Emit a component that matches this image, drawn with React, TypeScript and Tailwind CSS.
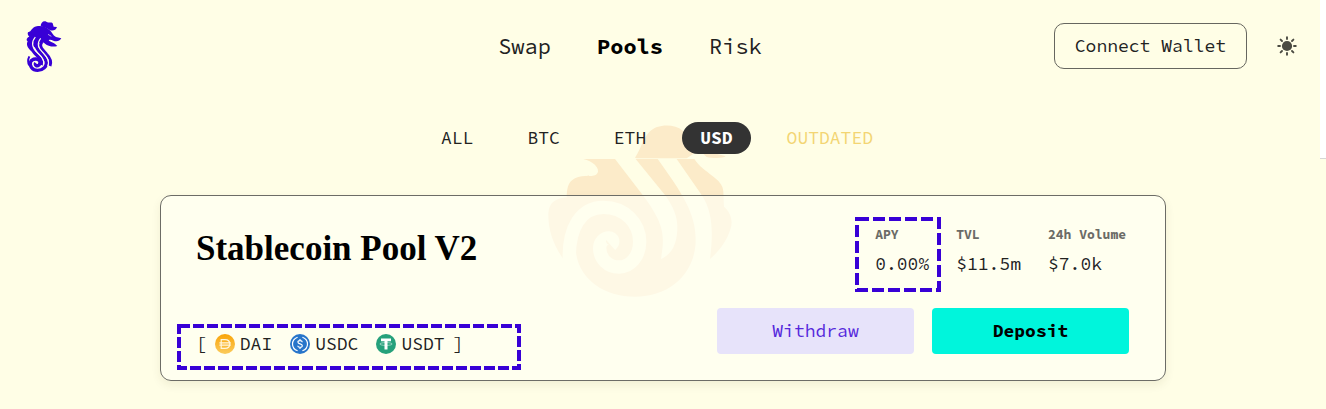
import React from "react";

const tabs = ["ALL", "BTC", "ETH", "USD", "OUTDATED"];

const stats = [
  { label: "APY", value: "0.00%" },
  { label: "TVL", value: "$11.5m" },
  { label: "24h Volume", value: "$7.0k" },
];

function Logo() {
  return (
    <svg viewBox="0 0 144 186" className="h-[62px] w-12" fill="none" aria-hidden="true">
      <path
        fill="#3800d6"
        d="M62 34C62 23 70 16 79 20C87 25 93 20 98 25L101 35L111 36C108 46 98 49 89 45C81 40 72 37 62 34Z"
      />
      <path
        fill="#3800d6"
        d="M24 52C36 50 34 37 50 34C64 31 78 36 88 44C96 51 98 60 108 66L124 70C119 80 108 80 100 77C93 74 89 74 86 76C92 82 102 82 112 93C98 97 84 93 75 86C65 79 60 80 56 88L44 96L34 108C20 98 19 86 23 79C17 75 21 67 28 65C23 60 22 56 24 52Z"
      />
      <path stroke="#3800d6" strokeWidth="10" d="M38 70C26 86 31 101 45 115C58 127 68 136 64 150" />
      <path stroke="#3800d6" strokeWidth="10" d="M53 76C43 92 51 102 63 115C77 130 86 147 73 158C61 169 43 168 35 158C26 146 32 133 46 132C58 131 64 143 57 150C50 156 43 149 47 144" />
      <path stroke="#3800d6" strokeWidth="9" d="M66 80C56 94 66 103 79 117C92 130 95 140 90 153" />
      <path stroke="#3800d6" strokeWidth="6" d="M28 124C23 134 23 142 28 151" />
      <path stroke="#fffee6" strokeWidth="3.5" d="M46 66C31 84 38 100 53 114C68 127 75 138 70 150" />
      <path stroke="#fffee6" strokeWidth="3.5" d="M62 70C48 88 56 100 70 114C84 129 89 139 83 154" />
      <path stroke="#fffee6" strokeWidth="2" d="M84 58L94 64" />
    </svg>
  );
}

function Watermark() {
  return (
    <svg
      viewBox="0 0 630 600"
      className="absolute top-[110px] left-1/2 ml-[-123px] h-[200px] w-[210px]"
      fill="none"
      aria-hidden="true"
    >
      <path
        fill="#fcebc9"
        d="M285 143C305 113 306 90 328 66C350 42 402 40 428 62L480 118L557 139C550 146 515 145 500 141L478 120L440 145H290Z"
      />
      <path
        fill="#fcebc9"
        d="M130 147C165 155 180 178 172 190C165 205 130 192 105 205C85 215 80 235 80 262C50 265 27 275 25 310C24 360 40 405 70 447L107 410C107 500 185 560 285 560C400 560 467 480 467 390C467 310 430 255 353 147Z"
      />
      <path
        fill="#fcebc9"
        d="M410 147H463C490 190 550 205 550 245L552 290C570 305 580 330 572 355C560 395 540 420 510 447C518 380 522 310 485 255Z"
      />
      <path fill="#fffee6" d="M225 147H287L375 255C400 290 412 320 412 350C412 395 400 430 363 447C372 385 380 350 308 255Z" />
      <path
        stroke="#fffee6"
        strokeWidth="40"
        d="M88 455C84 350 125 292 190 292C255 292 299 340 299 395C299 440 270 471 237 471C203 471 179 445 179 415C179 396 192 384 207 384C219 384 222 396 212 405"
      />
    </svg>
  );
}

function SunIcon() {
  return (
    <svg viewBox="0 0 20 20" className="size-5" aria-hidden="true">
      <circle cx="10" cy="10" r="5.1" fill="#4b4b42" />
      <path
        stroke="#4b4b42"
        strokeWidth="1.9"
        strokeLinecap="round"
        d="M10 1.2V3M10 17V18.8M1.2 10H3M17 10H18.8M3.6 3.6L5 5M15 15L16.4 16.4M3.6 16.4L5 15M15 5L16.4 3.6"
      />
    </svg>
  );
}

function DaiIcon() {
  return (
    <svg viewBox="0 0 20 20" className="size-5" fill="none" aria-hidden="true">
      <defs>
        <linearGradient id="dai" x1="0" y1="0" x2="0" y2="1">
          <stop offset="0" stopColor="#f9a408" />
          <stop offset="1" stopColor="#fbcb5c" />
        </linearGradient>
      </defs>
      <circle cx="10" cy="10" r="10" fill="url(#dai)" />
      <path stroke="#fff6dc" strokeWidth="1.2" d="M6.2 5.6H10C16.4 5.6 16.4 14.4 10 14.4H6.2ZM4.4 8.8H15.8M4.4 11.2H15.8" />
    </svg>
  );
}

function UsdcIcon() {
  return (
    <svg viewBox="0 0 20 20" className="size-5" fill="none" aria-hidden="true">
      <circle cx="10" cy="10" r="10" fill="#2775ca" />
      <path
        stroke="#fff"
        strokeWidth="1.2"
        d="M7.6 3.2C.8 5.6 .8 14.4 7.6 16.8M12.4 3.2C19.2 5.6 19.2 14.4 12.4 16.8M12.3 8.2C12.1 6 7.9 6.1 7.9 8.1C7.9 10.4 12.3 9.4 12.3 11.8C12.3 14 7.9 13.9 7.7 11.8M10 4.9V6.6M10 13.4V15.1"
      />
    </svg>
  );
}

function UsdtIcon() {
  return (
    <svg viewBox="0 0 20 20" className="size-5" fill="none" aria-hidden="true">
      <circle cx="10" cy="10" r="10" fill="#26a17b" />
      <path fill="#fff" d="M5 4.6H15V7.2H11.5V15.6H8.5V7.2H5Z" />
      <ellipse cx="10" cy="10" rx="6.2" ry="1.4" stroke="#fff" strokeWidth=".5" />
    </svg>
  );
}

function DashedFrame({ className, dash }: { className: string; dash: string }) {
  return (
    <svg className={`pointer-events-none absolute overflow-visible ${className}`} aria-hidden="true">
      <rect width="100%" height="100%" fill="none" stroke="#3800d6" strokeWidth="4" strokeDasharray={dash} />
    </svg>
  );
}

const tokens = [
  { name: "DAI", icon: <DaiIcon /> },
  { name: "USDC", icon: <UsdcIcon /> },
  { name: "USDT", icon: <UsdtIcon /> },
];

export default function App() {
  return (
    <div className="relative isolate min-h-screen overflow-hidden bg-[#fffee6] font-['Source_Code_Pro','Liberation_Mono',monospace] text-lg text-[#22221f]">
      <div className="flex">
        <div className="min-w-0 flex-1">
          <header className="grid h-[92px] grid-cols-[1fr_auto_1fr] items-center pr-[23px] pl-5">
            <a href="#home" aria-label="Home" className="justify-self-start">
              <Logo />
            </a>
            <nav className="flex gap-[46px] pr-[57px] text-[22px] leading-7">
              <a href="#swap">Swap</a>
              <a href="#pools" className="font-bold text-black">Pools</a>
              <a href="#risk">Risk</a>
            </nav>
            <div className="flex items-center gap-[30px] justify-self-end">
              <button className="h-[46px] rounded-[10px] border border-[#66665f] px-5 whitespace-nowrap">
                Connect Wallet
              </button>
              <button aria-label="Toggle theme">
                <SunIcon />
              </button>
            </div>
          </header>
          <div className="flex h-[67px] items-start justify-center gap-[18px] pt-[30px] pr-[6px]">
            {tabs.map((t) => (
              <button
                key={t}
                className={
                  t === "USD"
                    ? "relative z-10 h-8 rounded-full bg-[#333] px-[18px] font-bold text-white"
                    : t === "OUTDATED"
                      ? "relative z-10 h-8 px-[18px] text-[#f3d573]"
                      : "relative z-10 h-8 px-[18px]"
                }
              >
                {t}
              </button>
            ))}
          </div>
        </div>
        <div className="w-[6px] border-b border-[#d6d6d6] bg-white" />
      </div>

      <Watermark />

      <main className="relative px-6 pt-9 pb-7">
        <section className="mx-auto grid w-full max-w-[1006px] grid-cols-[1fr_auto] rounded-[11px] border border-[#6c6c66] bg-[#fffff5]/65 pt-[29px] pr-9 pb-[26px] pl-[35px] shadow-[0_4px_10px_rgba(80,70,0,0.08)]">
          <div className="flex flex-col justify-between">
            <h1 className="font-['Liberation_Serif',serif] text-[35px] leading-12 font-bold text-black">
              Stablecoin Pool V2
            </h1>
            <div className="relative flex items-center gap-[18px] leading-5">
              <div className="flex items-center gap-2">
                <span>[</span>
                <span className="flex items-center gap-[5px]">
                  {tokens[0].icon}
                  {tokens[0].name}
                </span>
              </div>
              <span className="flex items-center gap-[5px]">
                {tokens[1].icon}
                {tokens[1].name}
              </span>
              <div className="flex items-center gap-2">
                <span className="flex items-center gap-[5px]">
                  {tokens[2].icon}
                  {tokens[2].name}
                </span>
                <span>]</span>
              </div>
              <DashedFrame className="top-[-8px] left-[-17px] h-[42px] w-[340px]" dash="11 3" />
            </div>
          </div>

          <div className="flex flex-col gap-8">
            <dl className="flex justify-end gap-[27px]">
              {stats.map((s) => (
                <div key={s.label} className="relative last:min-w-[81px]">
                  <dt className="text-[13px] leading-5 font-bold text-[#6b6b66]">{s.label}</dt>
                  <dd className="mt-[7px] leading-6">{s.value}</dd>
                  {s.label === "APY" && (
                    <DashedFrame className="top-[-6px] left-[-18px] h-[71px] w-[82px]" dash="12 4" />
                  )}
                </div>
              ))}
            </dl>
            <div className="flex gap-[18px]">
              <button className="h-[46px] w-[197px] rounded-[4px] bg-[#e7e3fa] text-[#5528dc]">Withdraw</button>
              <button className="h-[46px] w-[197px] rounded-[4px] bg-[#00f5dc] font-bold text-black">Deposit</button>
            </div>
          </div>
        </section>
      </main>
    </div>
  );
}
